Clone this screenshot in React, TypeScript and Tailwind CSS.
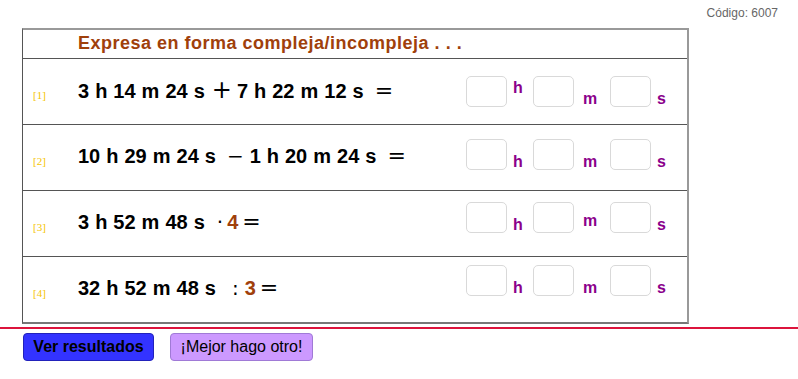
import React from "react";

const num = "text-[20px] font-bold font-['Liberation_Sans',sans-serif] text-black";
const op = "font-['DejaVu_Sans',sans-serif] text-black";
const brown = "text-[20px] font-bold font-['Liberation_Sans',sans-serif] text-[#a0400b]";

const Box = () => (
  <div className="w-[41px] h-[31px] border border-[#d9d9d9] rounded-[5px] bg-white" />
);

const unit = "text-[16px] font-bold font-['Liberation_Sans',sans-serif] text-[#8b008b] leading-none";

type AnsProps = { shift: string; hOff: string; mOff: string; sOff: string };

const Answer = ({ shift, hOff, mOff, sOff }: AnsProps) => (
  <div className={`flex items-end ${shift}`}>
    <Box />
    <span className={`w-[26px] pl-[6px] ${unit} ${hOff}`}>h</span>
    <Box />
    <span className={`w-[36px] pl-[9px] ${unit} ${mOff}`}>m</span>
    <Box />
    <span className={`pl-[6px] ${unit} ${sOff}`}>s</span>
  </div>
);

const Label = ({ n }: { n: number }) => (
  <div className="w-[55px] pl-[10px] pt-[8px] text-[11px] font-['Liberation_Serif',serif] text-[#f5c400]">
    [{n}]
  </div>
);

const Row = ({ children, last }: { children: React.ReactNode; last?: boolean }) => (
  <div className={`flex items-center ${last ? "h-[65px]" : "h-[66px] border-b border-[#555]"}`}>
    {children}
  </div>
);

export default function App() {
  return (
    <div className="w-[798px] h-[379px] bg-white flex flex-col">
      <div className="h-[28px] flex justify-end pr-[20px] pt-[4px]">
        <span className="text-[12px] text-[#666] font-['Liberation_Sans',sans-serif]">Código: 6007</span>
      </div>
      <div className="ml-[22px] w-[667px] border-t-2 border-r-2 border-[#999] border-l border-l-[#555] border-b-2 border-b-[#777]">
        <div className="h-[29px] flex items-center border-b border-[#555] pl-[55px] pb-[1px]">
          <span className="text-[18px] font-bold font-['Liberation_Sans',sans-serif] text-[#a0400b] tracking-[0.5px]">
            Expresa en forma compleja/incompleja . . .
          </span>
        </div>

        <Row>
          <Label n={1} />
          <div className="w-[388px] flex items-baseline gap-[6px] pb-[4px]">
            <span className={num}>3</span>
            <span className={num}>h</span>
            <span className={num}>14</span>
            <span className={num}>m</span>
            <span className={num}>24</span>
            <span className={num}>s</span>
            <span className={`${op} text-[24px] ml-[1px]`}>+</span>
            <span className={`${num} ml-[-1px]`}>7</span>
            <span className={num}>h</span>
            <span className={num}>22</span>
            <span className={num}>m</span>
            <span className={num}>12</span>
            <span className={num}>s</span>
            <span className={`${op} text-[22px] ml-[5px]`}>=</span>
          </div>
          <Answer shift="" hOff="mb-[11px]" mOff="mb-0" sOff="mb-0" />
        </Row>

        <Row>
          <Label n={2} />
          <div className="w-[388px] flex items-baseline gap-[6px] pb-[4px]">
            <span className={num}>10</span>
            <span className={num}>h</span>
            <span className={num}>29</span>
            <span className={num}>m</span>
            <span className={num}>24</span>
            <span className={num}>s</span>
            <span className={`${op} text-[20px] ml-[5px]`}>−</span>
            <span className={num}>1</span>
            <span className={num}>h</span>
            <span className={num}>20</span>
            <span className={num}>m</span>
            <span className={num}>24</span>
            <span className={num}>s</span>
            <span className={`${op} text-[22px] ml-[5px]`}>=</span>
          </div>
          <Answer shift="mb-[7px]" hOff="mb-0" mOff="mb-0" sOff="mb-0" />
        </Row>

        <Row>
          <Label n={3} />
          <div className="w-[388px] flex items-baseline gap-[6px] pb-[4px]">
            <span className={num}>3</span>
            <span className={num}>h</span>
            <span className={num}>52</span>
            <span className={num}>m</span>
            <span className={num}>48</span>
            <span className={num}>s</span>
            <span className={`${op} text-[20px] ml-[6px]`}>·</span>
            <span className={`${brown} ml-[-2px]`}>4</span>
            <span className={`${op} text-[22px] ml-[-2px]`}>=</span>
          </div>
          <Answer shift="mb-[12px]" hOff="mb-0" mOff="mb-[4px]" sOff="mb-0" />
        </Row>

        <Row last>
          <Label n={4} />
          <div className="w-[388px] flex items-baseline gap-[6px] pb-[4px]">
            <span className={num}>32</span>
            <span className={num}>h</span>
            <span className={num}>52</span>
            <span className={num}>m</span>
            <span className={num}>48</span>
            <span className={num}>s</span>
            <span className={`${op} text-[20px] ml-[10px]`}>:</span>
            <span className={brown}>3</span>
            <span className={`${op} text-[22px] ml-[-2px]`}>=</span>
          </div>
          <Answer shift="mb-[19px]" hOff="mb-0" mOff="mb-0" sOff="mb-0" />
        </Row>
      </div>

      <div className="mt-[3px] h-[2px] w-full bg-[#dc143c]" />

      <div className="flex gap-[16px] pl-[23px] pt-[4px]">
        <button className="w-[131px] h-[28px] bg-[#3333ff] border border-[#2222bb] rounded-[4px] text-[16px] font-bold text-black font-['Liberation_Sans',sans-serif]">
          Ver resultados
        </button>
        <button className="w-[143px] h-[28px] bg-[#cc99ff] border border-[#a07ad6] rounded-[4px] text-[16px] text-black font-['Liberation_Sans',sans-serif]">
          ¡Mejor hago otro!
        </button>
      </div>
    </div>
  );
}
